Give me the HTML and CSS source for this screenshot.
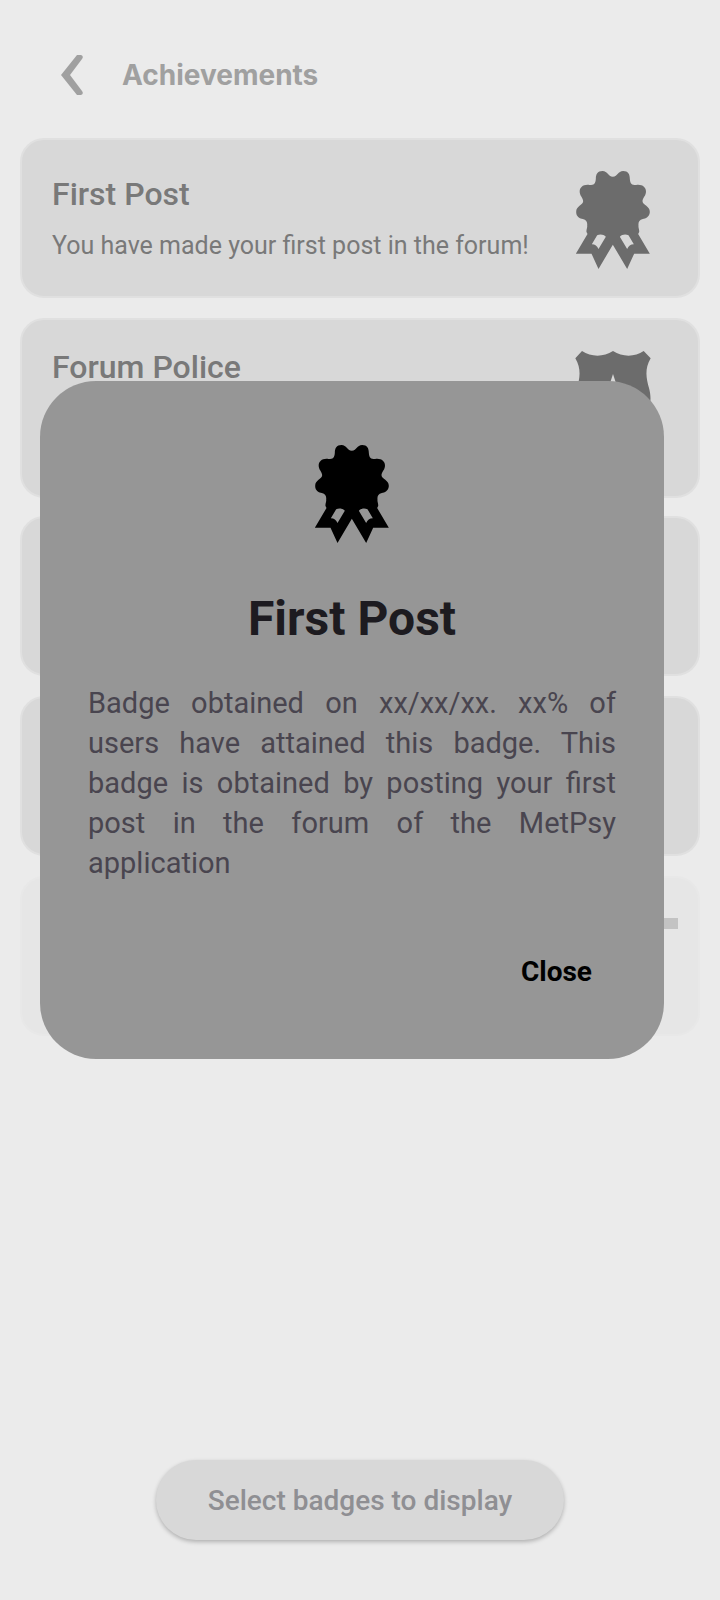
FILE: index.html
```
<!DOCTYPE html>
<html lang="en">
<head>
<meta charset="utf-8">
<meta name="viewport" content="width=device-width, initial-scale=1">
<title>Achievements</title>
<link rel="stylesheet" href="styles.css">
</head>
<body>
<svg class="sprite" aria-hidden="true">
  <symbol id="award" viewBox="76 47 221 294">
    <path fill-rule="evenodd" d="M186 64C201 64 201 47 217 47C232 47 237 57 237 70C238 85 242 89 256 89C276 86 288 98 285 113C283 124 275 128 275 138C276 151 297 151 297 170C296 185 284 190 276 191C265 194 262 200 263 210C262 218 266 222 265 230L262 236L297 295H250L229 341L186 268L143 341L122 295H75L110 236L107 230C106 222 110 218 109 210C110 200 107 194 96 191C88 190 76 185 76 170C76 151 96 151 97 138C97 128 89 124 87 113C84 98 96 86 116 89C130 89 134 85 135 70C135 57 140 47 155 47C171 47 171 64 186 64ZM207 244C213 237 225 235 233 240L249 267C239 267 233 273 229 281ZM165 244C159 237 147 235 139 240L123 267C133 267 139 273 143 281Z"/>
  </symbol>
  <symbol id="shield" viewBox="105 159 228 294">
    <path fill-rule="evenodd" d="M126 159C153 177 190 178 219 159C248 178 285 177 311 159L332 181C312 215 320 245 327 270C350 355 280 390 219 429C158 390 88 355 111 270C118 245 126 215 106 181ZM219 228L207 265H169L199 288L188 324L219 302L250 324L239 288L269 265H231Z"/>
  </symbol>
</svg>

<main class="screen">
  <header class="topbar">
    <button class="back" type="button" aria-label="Back">
      <svg viewBox="0 0 22 40" aria-hidden="true"><path d="M16 0H20Q23 1 21 4L9 20L21 36Q23 39 20 40H16L0 20Z"/></svg>
    </button>
    <h1 class="heading">Achievements</h1>
  </header>

  <section class="cards">
    <article class="card">
      <div class="card-text">
        <h2 class="card-title">First Post</h2>
        <p class="card-note">You have made your first post in the forum!</p>
      </div>
      <svg class="card-icon" aria-hidden="true"><use href="#award"/></svg>
    </article>
    <article class="card card-tall">
      <div class="card-text">
        <h2 class="card-title">Forum Police</h2>
      </div>
      <svg class="card-icon" aria-hidden="true"><use href="#shield"/></svg>
    </article>
    <article class="card"></article>
    <article class="card"></article>
    <article class="card card-locked"><span class="bar"></span></article>
  </section>

  <footer class="footer">
    <button class="select" type="button">Select badges to display</button>
  </footer>
</main>

<div class="overlay">
  <section class="dialog" role="dialog" aria-modal="true" aria-labelledby="dialog-title">
    <svg class="dialog-icon" aria-hidden="true"><use href="#award"/></svg>
    <h2 class="dialog-title" id="dialog-title">First Post</h2>
    <p class="dialog-body">Badge obtained on xx/xx/xx. xx% of users have attained this badge. This badge is obtained by posting your first post in the forum of the MetPsy application</p>
    <button class="close" type="button">Close</button>
  </section>
</div>
</body>
</html>
```
FILE: styles.css
```
* { box-sizing: border-box; }

body {
  margin: 0;
  background: #ebebeb;
  font-family: Roboto, "Liberation Sans", sans-serif;
}

h1, h2, p { margin: 0; }

button {
  border: 0;
  background: none;
  font-family: inherit;
  cursor: pointer;
}

.sprite {
  position: absolute;
  width: 0;
  height: 0;
}

.screen {
  display: flex;
  flex-direction: column;
  min-height: 100vh;
  padding: 47px 20px 60px;
}

.topbar {
  display: flex;
  align-items: center;
  gap: 31px;
  height: 56px;
  margin-bottom: 35px;
  padding-left: 33px;
}

.back {
  display: flex;
  padding: 8px;
}

.back svg {
  width: 22px;
  height: 40px;
  fill: #a0a0a0;
}

.heading {
  color: #a0a0a0;
  font: 700 28px/40px Inter, sans-serif;
}

.cards {
  display: flex;
  flex-direction: column;
}

.card {
  display: flex;
  align-items: center;
  justify-content: space-between;
  min-height: 160px;
  margin-bottom: 20px;
  padding: 0 47px 0 30px;
  border: 2px solid #e0e0e0;
  border-radius: 24px;
  background: #d8d8d8;
}

.card-tall {
  align-items: flex-start;
  min-height: 180px;
  margin-bottom: 18px;
  padding-top: 27px;
}

.card-title {
  color: #797979;
  font-size: 32px;
  font-weight: 500;
  line-height: 40px;
}

.card-note {
  margin-top: 16px;
  color: #797979;
  font-size: 25px;
  line-height: 32px;
}

.card-icon {
  flex: none;
  width: 76px;
  height: 98px;
  margin-top: 4px;
  fill: #6c6c6c;
}

.card-locked {
  align-items: flex-start;
  justify-content: flex-end;
  padding: 40px 20px 0;
  border-color: #e8e8e8;
  background: #e6e6e6;
}

.bar {
  width: 64px;
  height: 11px;
  background: #c3c3c3;
}

.footer {
  display: flex;
  justify-content: center;
  margin-top: auto;
}

.select {
  height: 80px;
  padding: 0 52px;
  border-radius: 40px;
  background: #d8d8d8;
  box-shadow: 0 2px 4px rgba(0, 0, 0, 0.25);
  color: #8f8f93;
  font-size: 28px;
  font-weight: 500;
}

.overlay {
  position: absolute;
  inset: 0;
  display: flex;
  align-items: center;
  padding: 0 56px 160px 40px;
}

.dialog {
  display: flex;
  flex: 1;
  flex-direction: column;
  align-items: center;
  padding: 64px 48px 48px;
  border-radius: 56px;
  background: #969696;
}

.dialog-icon {
  width: 76px;
  height: 98px;
}

.dialog-title {
  margin-top: 44px;
  color: #1d1b20;
  font-size: 48px;
  font-weight: 700;
  line-height: 64px;
}

.dialog-body {
  margin-top: 32px;
  color: #49454f;
  font-size: 29px;
  line-height: 40px;
  text-align: justify;
}

.close {
  align-self: flex-end;
  height: 80px;
  margin-top: 48px;
  padding: 0 24px;
  color: #000;
  font-size: 28px;
  font-weight: 700;
}
```
